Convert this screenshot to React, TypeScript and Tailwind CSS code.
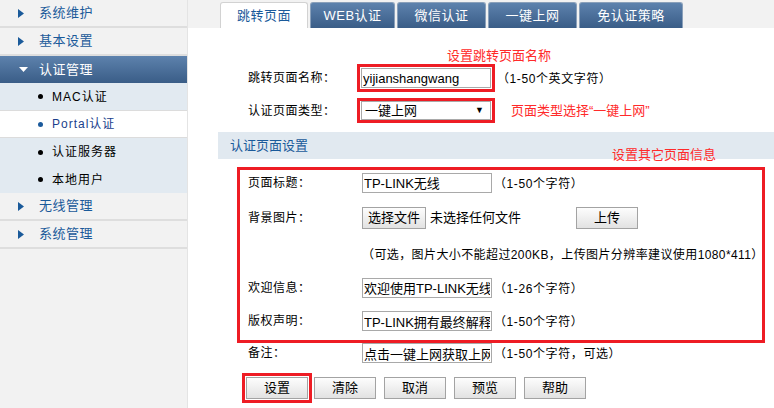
import React from "react";

const menu = [
  { label: "系统维护" },
  { label: "基本设置" },
  { label: "认证管理", open: true },
  { label: "无线管理" },
  { label: "系统管理" },
];

const subItems = [
  { label: "MAC认证", h: "h-[28px]", active: false, line: true },
  { label: "Portal认证", h: "h-[27px]", active: true, line: true },
  { label: "认证服务器", h: "h-[28px]", active: false, line: false },
  { label: "本地用户", h: "h-[27px]", active: false, line: false },
];

const tabs = [
  { label: "跳转页面", w: "w-[88px]" },
  { label: "WEB认证", w: "w-[85px]" },
  { label: "微信认证", w: "w-[89px]" },
  { label: "一键上网", w: "w-[89px]" },
  { label: "免认证策略", w: "w-[104px]" },
];

function RightArrow() {
  return (
    <svg width="6" height="9" viewBox="0 0 6 9" className="shrink-0">
      <path d="M0 0 L6 4.5 L0 9 Z" fill="#1a5a9a" />
    </svg>
  );
}

function DownArrow() {
  return (
    <svg width="9" height="5" viewBox="0 0 9 5" className="shrink-0">
      <path d="M0 0 L9 0 L4.5 5 Z" fill="#ffffff" />
    </svg>
  );
}

function Sidebar() {
  return (
    <div className="flex h-full w-[188px] shrink-0 flex-col border-r border-[#e4e4e4] bg-[#f2f2f2]">
      {menu.map((m) =>
        m.open ? (
          <React.Fragment key={m.label}>
            <div className="flex h-[27px] items-center gap-[11px] bg-gradient-to-b from-[#5d82ad] to-[#3a5d87] pl-[19px] text-[13px] text-white">
              <DownArrow />
              <span className="tracking-[0.5px]">{m.label}</span>
            </div>
            {subItems.map((s) => (
              <div
                key={s.label}
                className={`flex ${s.h} items-center gap-[9px] pl-[38px] text-[12px] ${
                  s.active ? "bg-white text-[#1b3f8c]" : "bg-[#e2eaf1] text-black"
                } ${s.line ? "border-b border-[#dcdcdc]" : ""}`}
              >
                <span className={`h-[5px] w-[5px] rounded-full ${s.active ? "bg-[#1b5a9c]" : "bg-black"}`} />
                <span className="tracking-[1px]">{s.label}</span>
              </div>
            ))}
          </React.Fragment>
        ) : (
          <div
            key={m.label}
            className="flex h-[28px] items-center gap-[15px] border-b-2 border-[#dedede] pl-[18px] text-[13px] text-[#1a5a9a]"
          >
            <RightArrow />
            <span className="tracking-[0.5px]">{m.label}</span>
          </div>
        )
      )}
    </div>
  );
}

function TextBox({ value }: { value: string }) {
  return (
    <input
      readOnly
      value={value}
      className="h-[20px] w-[130px] border border-[#a9a9a9] bg-white px-[1px] text-[13px] text-black outline-none"
    />
  );
}

function Btn({ label, w }: { label: string; w: string }) {
  return (
    <div
      className={`flex h-[22px] ${w} items-center justify-center border border-[#a3a3a3] bg-gradient-to-b from-[#fdfdfd] to-[#e2e2e2] text-[13px] text-black`}
    >
      {label}
    </div>
  );
}

function Hint({ text }: { text: string }) {
  return <span className="whitespace-nowrap text-[12px] tracking-[0.6px] text-black">{text}</span>;
}

export default function App() {
  return (
    <div className="flex h-[408px] w-[774px] overflow-hidden bg-white font-['Liberation_Sans','Noto_Sans_CJK_SC',sans-serif]">
      <Sidebar />
      <div className="relative flex-1">
        <div className="flex h-[28px] items-end gap-[2px] bg-[#f2f2f2] pl-[32px]">
          {tabs.map((t, i) => (
            <div
              key={t.label}
              className={`flex h-[26px] ${t.w} items-center justify-center rounded-t-[3px] text-[13px] tracking-[0.5px] ${
                i === 0
                  ? "border border-b-0 border-[#d2d2d2] bg-white text-[#1a5a9a]"
                  : "border border-b-0 border-[#8aa0ba] bg-gradient-to-b from-[#5d82ad] to-[#3a5d87] text-white"
              }`}
            >
              {t.label}
            </div>
          ))}
        </div>

        {/* annotations */}
        <div className="absolute left-[259px] top-[46px] text-[13px] text-[#ff2a2a]">设置跳转页面名称</div>
        <div className="absolute left-[323px] top-[101px] text-[13px] text-[#ff2a2a]">页面类型选择“一键上网”</div>
        <div className="absolute left-[424px] top-[145px] text-[13px] text-[#ff2a2a]">设置其它页面信息</div>

        <div className="pt-[36px]">
          <div className="flex h-[28px] items-center pl-[60px]">
            <span className="w-[109px] text-[12px] tracking-[0.5px] text-black">跳转页面名称：</span>
            <div className="flex h-[28px] w-[138px] items-center justify-center border-[3px] border-[#ee1c24]">
              <TextBox value="yijianshangwang" />
            </div>
            <span className="ml-[2px]">
              <Hint text="（1-50个英文字符）" />
            </span>
          </div>

          <div className="mt-[6px] flex h-[25px] items-center pl-[60px]">
            <span className="w-[109px] text-[12px] tracking-[0.5px] text-black">认证页面类型：</span>
            <div className="flex h-[25px] w-[138px] items-center justify-center border-[3px] border-[#ee1c24]">
              <div className="flex h-[19px] w-[130px] items-center justify-between border border-[#a9a9a9] bg-white pl-[3px] pr-[6px] text-[13px] text-black">
                <span>一键上网</span>
                <span className="text-[9px]">▼</span>
              </div>
            </div>
          </div>

          <div className="ml-[30px] mt-[9px] flex h-[27px] items-center bg-[#e1e9f0] pl-[12px] text-[13px] text-[#1a5a9a]">
            认证页面设置
          </div>

          <div className="ml-[49px] mt-[8px] flex h-[176px] w-[528px] flex-col border-[3px] border-[#ee1c24] pl-[8px]">
            <div className="flex h-[25px] items-center">
              <span className="w-[114px] text-[12px] tracking-[0.5px] text-black">页面标题：</span>
              <TextBox value="TP-LINK无线" />
              <span className="ml-[2px]">
                <Hint text="（1-50个字符）" />
              </span>
            </div>
            <div className="flex h-[46px] items-center">
              <span className="w-[114px] text-[12px] tracking-[0.5px] text-black">背景图片：</span>
              <Btn label="选择文件" w="w-[64px]" />
              <span className="ml-[4px] text-[13px] text-black">未选择任何文件</span>
              <span className="ml-[55px]">
                <Btn label="上传" w="w-[62px]" />
              </span>
            </div>
            <div className="flex h-[28px] items-center pl-[114px]">
              <span className="whitespace-nowrap text-[12px] tracking-[0.4px] text-black">
                （可选，图片大小不能超过200KB，上传图片分辨率建议使用1080*411）
              </span>
            </div>
            <div className="flex h-[37px] items-center">
              <span className="w-[114px] text-[12px] tracking-[0.5px] text-black">欢迎信息：</span>
              <TextBox value="欢迎使用TP-LINK无线" />
              <span className="ml-[2px]">
                <Hint text="（1-26个字符）" />
              </span>
            </div>
            <div className="flex h-[30px] items-center">
              <span className="w-[114px] text-[12px] tracking-[0.5px] text-black">版权声明：</span>
              <TextBox value="TP-LINK拥有最终解释权" />
              <span className="ml-[2px]">
                <Hint text="（1-50个字符）" />
              </span>
            </div>
          </div>

          <div className="flex h-[20px] items-center pl-[60px]">
            <span className="w-[114px] text-[12px] tracking-[0.5px] text-black">备注：</span>
            <TextBox value="点击一键上网获取上网权限" />
            <span className="ml-[2px]">
              <Hint text="（1-50个字符，可选）" />
            </span>
          </div>

          <div className="ml-[54px] mt-[10px] flex items-center">
            <div className="flex h-[30px] items-center border-[3px] border-[#ee1c24] px-[1px]">
              <Btn label="设置" w="w-[62px]" />
            </div>
            <div className="ml-[2px] flex gap-[8px]">
              <Btn label="清除" w="w-[62px]" />
              <Btn label="取消" w="w-[62px]" />
              <Btn label="预览" w="w-[62px]" />
              <Btn label="帮助" w="w-[62px]" />
            </div>
          </div>
        </div>
      </div>
    </div>
  );
}
